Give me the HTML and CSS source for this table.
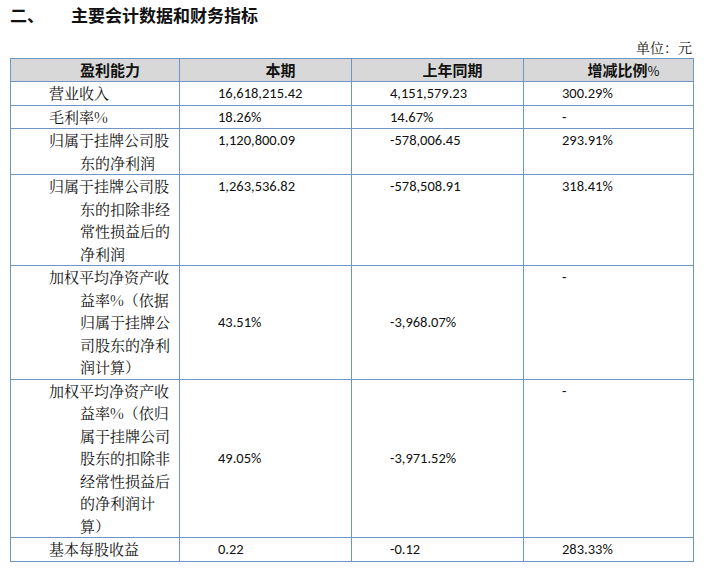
FILE: index.html
```html
<!DOCTYPE html>
<html lang="zh-CN">
<head>
<meta charset="utf-8">
<link rel="stylesheet" href="styles.css">
</head>
<body>
<h1 class="title"><span class="title-num">二、</span><span class="title-text">主要会计数据和财务指标</span></h1>
<div class="unit">单位：元</div>
<table class="fin">
  <colgroup>
    <col class="c1"><col class="c2"><col class="c3"><col class="c4">
  </colgroup>
  <thead>
    <tr><th>盈利能力</th><th>本期</th><th>上年同期</th><th>增减比例<span class="pct">%</span></th></tr>
  </thead>
  <tbody>
    <tr><td class="lbl"><span class="l1">营业收入</span></td><td class="num">16,618,215.42</td><td class="num">4,151,579.23</td><td class="num">300.29%</td></tr>
    <tr><td class="lbl"><span class="l1">毛利率%</span></td><td class="num">18.26%</td><td class="num">14.67%</td><td class="num">-</td></tr>
    <tr><td class="lbl"><span class="l1">归属于挂牌公司股</span><span class="ln">东的净利润</span></td><td class="num">1,120,800.09</td><td class="num">-578,006.45</td><td class="num">293.91%</td></tr>
    <tr><td class="lbl"><span class="l1">归属于挂牌公司股</span><span class="ln">东的扣除非经</span><span class="ln">常性损益后的</span><span class="ln">净利润</span></td><td class="num">1,263,536.82</td><td class="num">-578,508.91</td><td class="num">318.41%</td></tr>
    <tr><td class="lbl"><span class="l1">加权平均净资产收</span><span class="ln">益率%（依据</span><span class="ln">归属于挂牌公</span><span class="ln">司股东的净利</span><span class="ln">润计算）</span></td><td class="num mid">43.51%</td><td class="num mid">-3,968.07%</td><td class="num">-</td></tr>
    <tr><td class="lbl"><span class="l1">加权平均净资产收</span><span class="ln">益率%（依归</span><span class="ln">属于挂牌公司</span><span class="ln">股东的扣除非</span><span class="ln">经常性损益后</span><span class="ln">的净利润计</span><span class="ln">算）</span></td><td class="num mid">49.05%</td><td class="num mid">-3,971.52%</td><td class="num">-</td></tr>
    <tr><td class="lbl"><span class="l1">基本每股收益</span></td><td class="num">0.22</td><td class="num">-0.12</td><td class="num">283.33%</td></tr>
  </tbody>
</table>
</body>
</html>
```
FILE: styles.css
```css
html, body {
  margin: 0;
  padding: 0;
  background: #ffffff;
}
body {
  width: 720px;
  height: 570px;
  overflow: hidden;
  font-family: "Noto Serif CJK SC", "Noto Sans CJK SC", serif;
  color: #111;
}
.title {
  margin: 0;
  height: 30px;
  line-height: 30px;
  font-family: "Noto Sans CJK SC", sans-serif;
  font-size: 17px;
  font-weight: 700;
  display: flex;
  padding-left: 10px;
}
.title-num {
  width: 61px;
}
.unit {
  margin-top: 7px;
  height: 20px;
  line-height: 20px;
  font-size: 14px;
  text-align: right;
  padding-right: 28px;
  color: #222;
}
.fin {
  margin: 1px 0 0 10px;
  border-collapse: collapse;
  table-layout: fixed;
  width: 683px;
  font-size: 15px;
}
.c1 { width: 169px; }
.c2 { width: 172px; }
.c3 { width: 172px; }
.c4 { width: 170px; }
.fin th, .fin td {
  border: 1px solid #6f95c5;
  padding: 0;
  line-height: 22.5px;
  vertical-align: top;
  text-align: left;
}
.fin th {
  background: #d8d8d8;
  font-family: "Noto Sans CJK SC", sans-serif;
  font-weight: 700;
  text-align: center;
  padding-left: 30px;
  line-height: 21px;
}
.pct {
  font-weight: 400;
  font-size: 13px;
}
.fin td.lbl {
  padding-left: 38px;
}
.l1, .ln {
  display: block;
  white-space: nowrap;
}
.ln {
  padding-left: 31px;
}
.num {
  font-family: "Carlito", "Open Sans", sans-serif;
  font-size: 14.5px;
}
.fin td.num {
  padding-left: 38px;
}
.fin td.mid {
  vertical-align: middle;
}
```
